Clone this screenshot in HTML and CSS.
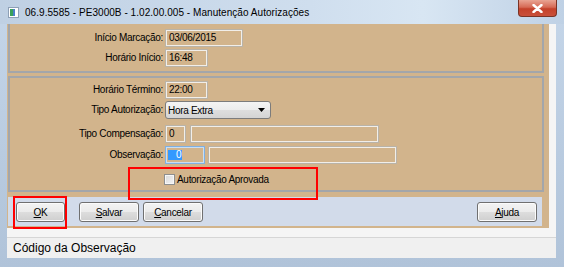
FILE: index.html
```html
<!DOCTYPE html>
<html lang="pt-BR">
  <head>
    <meta charset="UTF-8" />
    <title>Manutenção Autorizações</title>
    <link rel="stylesheet" href="styles.css">
  </head>
  <body>
    <div class="window">
      <div class="titlebar">
        <svg class="app-icon" width="11" height="11" viewBox="0 0 11 11">
          <rect x="0.5" y="0.5" width="10" height="10" fill="#fff" stroke="#8ea0b6" />
          <rect x="2" y="2" width="3" height="7" fill="#3aa15a" />
          <rect x="5" y="2" width="2" height="7" fill="#4a7fc8" />
        </svg>
        <span class="title">06.9.5585 - PE3000B - 1.02.00.005 - Manutenção Autorizações</span>
        <div class="close">
          <svg width="11" height="9" viewBox="0 0 11 9">
            <path d="M1.5 1 L9.5 8 M9.5 1 L1.5 8" stroke="#fff" stroke-width="2.4" stroke-linecap="round" />
          </svg>
        </div>
      </div>

      <div class="client">
        <div class="form">
          <div class="panel panel-top">
            <div class="row">
              <label>Início Marcação:</label>
              <div class="field w-date">03/06/2015</div>
            </div>
            <div class="row gap-2">
              <label>Horário Início:</label>
              <div class="field w-time">16:48</div>
            </div>
          </div>

          <div class="panel panel-main">
            <div class="row">
              <label>Horário Término:</label>
              <div class="field w-time">22:00</div>
            </div>
            <div class="row gap-2">
              <label>Tipo Autorização:</label>
              <div class="select">
                <span>Hora Extra</span>
                <svg width="7" height="4" viewBox="0 0 7 4"><path d="M0 0 H7 L3.5 4 Z" fill="#000" /></svg>
              </div>
            </div>
            <div class="row gap-6">
              <label>Tipo Compensação:</label>
              <div class="field w-code">0</div>
              <div class="field w-desc next-4"></div>
            </div>
            <div class="row gap-3">
              <label>Observação:</label>
              <div class="field w-obs focused"><span class="selected">0</span></div>
              <div class="field w-desc next-3"></div>
            </div>
            <div class="check-row">
              <span class="checkbox"></span>
              <span class="check-label">Autorização Aprovada</span>
            </div>
          </div>

          <div class="button-bar">
            <button class="btn btn-ok"><u>O</u>K</button>
            <button class="btn btn-save"><u>S</u>alvar</button>
            <button class="btn"><u>C</u>ancelar</button>
            <button class="btn btn-help"><u>A</u>juda</button>
          </div>
        </div>

        <div class="status">Código da Observação</div>
      </div>

      <div class="mark mark-ok"></div>
      <div class="mark mark-check"></div>
    </div>
  </body>
</html>
```

FILE: styles.css
```css
body {
  margin: 0;
  font-family: "Liberation Sans", Arial, sans-serif;
  color: #000;
}

.window {
  position: relative;
  width: 564px;
  height: 267px;
  display: flex;
  flex-direction: column;
  background: linear-gradient(180deg, #c5d6e9, #b0c3d9);
  overflow: hidden;
}

.titlebar {
  height: 24px;
  display: flex;
  align-items: center;
  padding-left: 8px;
  background: linear-gradient(90deg, #bfd0e3, #cfdeee 55%, #d8e6f3 75%, #bfd1e5);
}

.app-icon {
  margin-right: 6px;
}

.title {
  font-size: 10px;
  letter-spacing: 0.05px;
}

.close {
  position: absolute;
  top: 0;
  right: 7px;
  width: 39px;
  height: 17px;
  box-sizing: border-box;
  border: 1px solid #7a3325;
  border-top: none;
  border-radius: 0 0 4px 4px;
  background: linear-gradient(180deg, #e9a493, #d66a55 45%, #c4412a 55%, #c9503a);
  display: flex;
  align-items: center;
  justify-content: center;
}

.client {
  flex: 1;
  margin: 0 8px 9px 7px;
  background: #f5f5f5;
  display: flex;
  flex-direction: column;
}

.form {
  width: 542px;
  height: 204px;
  box-sizing: border-box;
  padding: 0 5px 0 1px;
  background: #d2b48c;
  display: flex;
  flex-direction: column;
}

.panel {
  border: 2px solid #a3a6aa;
}

.panel-top {
  border-top: none;
  padding: 5px 0 4px;
}

.panel-main {
  margin-top: 3px;
  padding: 3px 0 2px;
}

.row {
  display: flex;
  height: 18px;
}

.gap-2 { margin-top: 2px; }
.gap-3 { margin-top: 3px; }
.gap-6 { margin-top: 6px; }

.row label,
.field,
.select,
.check-label,
.btn {
  font-size: 10px;
  letter-spacing: -0.3px;
}

.row label {
  width: 153px;
  padding-right: 2px;
  text-align: right;
  line-height: 18px;
}

.field {
  height: 18px;
  box-sizing: border-box;
  border: 1px solid #b9b3a8;
  box-shadow: inset 0 0 0 1px #f1eee9;
  padding-left: 3px;
  line-height: 16px;
}

.w-date { width: 78px; }
.w-time { width: 43px; }
.w-code { width: 21px; }
.w-obs { width: 40px; }
.w-desc { width: 189px; }
.next-4 { margin-left: 4px; }
.next-3 { margin-left: 3px; }

.field.focused {
  border-color: #7fb0e2;
  box-shadow: inset 0 0 0 1px #c9def3;
  padding-left: 2px;
}

.selected {
  display: inline-block;
  height: 10px;
  margin-top: 2px;
  padding: 0 1px 0 8px;
  line-height: 10px;
  background: #3399ff;
  color: #fff;
}

.select {
  width: 106px;
  height: 18px;
  box-sizing: border-box;
  border: 1px solid #7c7c7c;
  border-radius: 3px;
  background: linear-gradient(180deg, #f4f4f4, #ececec 50%, #dedede 51%, #d4d4d4);
  display: flex;
  align-items: center;
  justify-content: space-between;
  padding: 0 5px 0 2px;
}

.check-row {
  margin-top: 7px;
  height: 17px;
  display: flex;
  align-items: center;
  padding-left: 154px;
}

.checkbox {
  width: 11px;
  height: 11px;
  box-sizing: border-box;
  border: 1px solid #8e8f8f;
  background: linear-gradient(135deg, #d9d9d9, #f4f4f4);
  box-shadow: inset 0 0 0 1px #f7f7f7;
}

.check-label {
  margin-left: 2px;
}

.button-bar {
  margin: 5px 2px 0 0;
  height: 29px;
  box-sizing: border-box;
  padding: 5px 5px 4px 8px;
  background: #d2dbea;
  display: flex;
}

.btn {
  width: 60px;
  height: 20px;
  margin: 0 4px 0 0;
  padding: 0;
  font-family: inherit;
  color: #000;
  border: 1px solid #707070;
  border-radius: 3px;
  background: linear-gradient(180deg, #f3f3f3, #ebebeb 50%, #dddddd 51%, #cfcfcf);
  box-shadow: inset 0 0 0 1px #fbfbfb;
}

.btn-ok {
  width: 49px;
  margin-right: 14px;
}

.btn-help {
  margin: 0 0 0 auto;
}

.status {
  margin-top: 9px;
  height: 21px;
  box-sizing: border-box;
  border-top: 1px solid #d6d6d6;
  background: #f0f0f0;
  padding-left: 6px;
  font-size: 12px;
  line-height: 20px;
}

.mark {
  position: absolute;
  box-sizing: border-box;
  border: 2px solid #f00;
}

.mark-ok {
  left: 13px;
  top: 196px;
  width: 54px;
  height: 33px;
}

.mark-check {
  left: 128px;
  top: 167px;
  width: 190px;
  height: 33px;
}
```
